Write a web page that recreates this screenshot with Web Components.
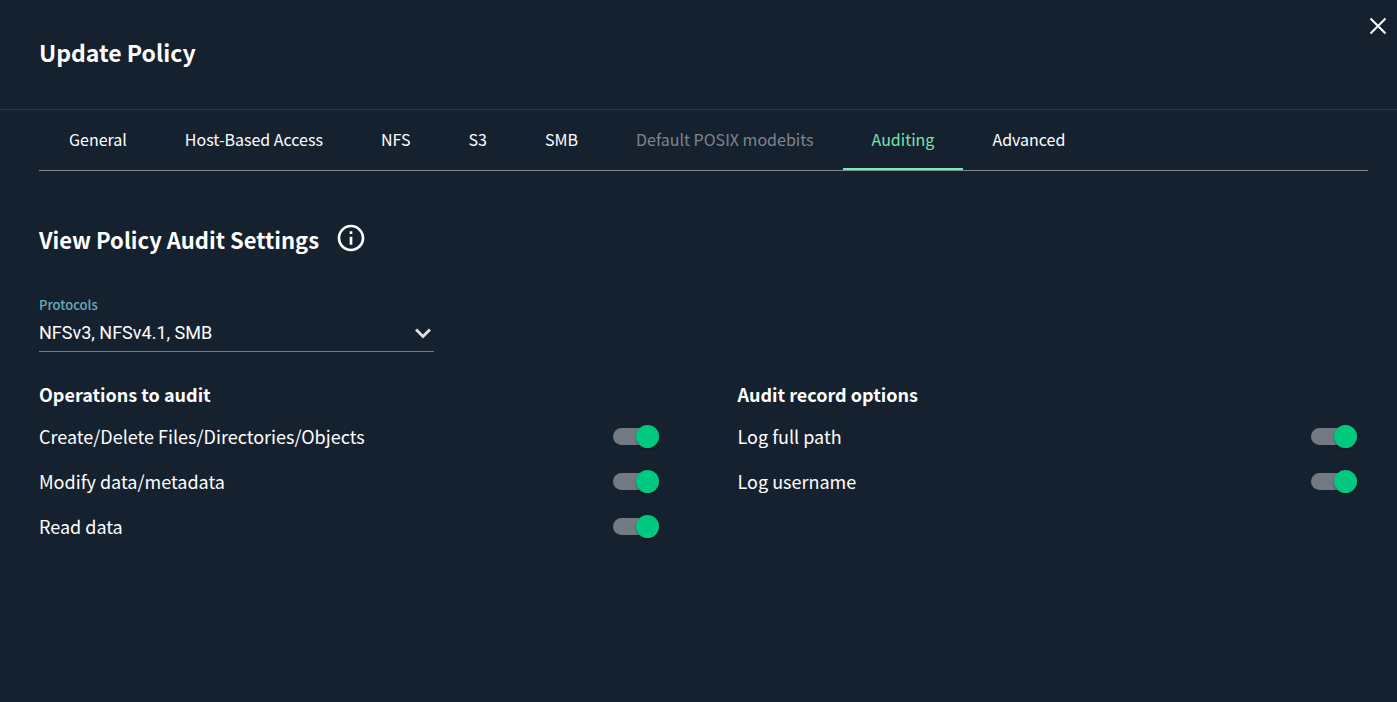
<!DOCTYPE html>
<html lang="en">
<head>
<meta charset="utf-8">
<title>Update Policy</title>
<style>
  html { background: #162130; }
  body {
    margin: 0;
    color: #fff;
    font-family: "Noto Sans CJK SC", "Noto Sans", sans-serif;
  }
</style>
</head>
<body>
<policy-dialog heading="Update Policy">
  <policy-tabs slot="tabs">
    <policy-tab>General</policy-tab>
    <policy-tab>Host-Based Access</policy-tab>
    <policy-tab>NFS</policy-tab>
    <policy-tab>S3</policy-tab>
    <policy-tab>SMB</policy-tab>
    <policy-tab disabled>Default POSIX modebits</policy-tab>
    <policy-tab selected>Auditing</policy-tab>
    <policy-tab>Advanced</policy-tab>
  </policy-tabs>
  <section-title>View Policy Audit Settings</section-title>
  <select-field label="Protocols" value="NFSv3, NFSv4.1, SMB"></select-field>
  <option-columns>
    <option-group heading="Operations to audit">
      <toggle-row>Create/Delete Files/Directories/Objects</toggle-row>
      <toggle-row>Modify data/metadata</toggle-row>
      <toggle-row>Read data</toggle-row>
    </option-group>
    <option-group heading="Audit record options">
      <toggle-row>Log full path</toggle-row>
      <toggle-row>Log username</toggle-row>
    </option-group>
  </option-columns>
</policy-dialog>

<script>
class BaseElement extends HTMLElement {
  render(html) {
    this.attachShadow({ mode: "open" }).innerHTML = html;
  }
}

customElements.define("policy-dialog", class extends BaseElement {
  connectedCallback() {
    this.render(`
      <style>
        :host { display: block; }
        header {
          display: flex; justify-content: space-between; align-items: flex-start;
          box-sizing: border-box; min-height: 110px;
          padding: 12px 5px 0 39px; border-bottom: 1px solid #1f3d50;
        }
        h1 { margin: 22px 0 0; font-size: 23px; line-height: 36px; font-weight: 700; }
        button { display: flex; padding: 0; border: 0; background: none; color: #fff; cursor: pointer; }
      </style>
      <header>
        <h1></h1>
        <button type="button" aria-label="Close">
          <svg width="28" height="28" viewBox="0 0 28 28" fill="none" stroke="currentColor" stroke-width="2"><path d="M6.5 6.5l15 15M21.5 6.5l-15 15"/></svg>
        </button>
      </header>
      <slot name="tabs"></slot>
      <main><slot></slot></main>`);
    this.shadowRoot.querySelector("h1").textContent = this.getAttribute("heading");
  }
});

customElements.define("policy-tabs", class extends BaseElement {
  connectedCallback() {
    this.render(`
      <style>
        :host { display: block; margin: 0 29px 0 39px; }
        div { display: flex; height: 60px; padding-left: 1px; border-bottom: 1px solid #7d898e; }
      </style>
      <div role="tablist"><slot></slot></div>`);
  }
});

customElements.define("policy-tab", class extends BaseElement {
  connectedCallback() {
    this.render(`
      <style>
        :host { display: flex; }
        button {
          padding: 0 29px; border: 0; background: none; color: #fff;
          border-bottom: 2px solid transparent;
          font: 400 16px/24px "Noto Sans CJK SC", "Noto Sans", sans-serif;
          white-space: nowrap; cursor: pointer;
        }
        :host([selected]) button { color: #78e3ad; border-bottom-color: #78ecac; }
        button:disabled { color: #7f858e; cursor: default; }
      </style>
      <button type="button" role="tab"><slot></slot></button>`);
    const button = this.shadowRoot.querySelector("button");
    button.disabled = this.hasAttribute("disabled");
    button.setAttribute("aria-selected", this.hasAttribute("selected"));
  }
});

customElements.define("section-title", class extends BaseElement {
  connectedCallback() {
    this.render(`
      <style>
        :host { display: flex; align-items: flex-start; gap: 16px; margin: 51px 39px 0; }
        h2 { margin: 0; font-size: 22px; line-height: 34px; font-weight: 700; }
        button { display: flex; padding: 0; border: 0; background: none; color: #fff; cursor: pointer; }
      </style>
      <h2><slot></slot></h2>
      <button type="button" aria-label="More information">
        <svg width="32" height="32" viewBox="0 0 24 24" fill="currentColor"><path d="M11 7h2v2h-2zm0 4h2v6h-2zm1-9C6.48 2 2 6.48 2 12s4.48 10 10 10 10-4.48 10-10S17.52 2 12 2zm0 18c-4.41 0-8-3.590-8-8s3.590-8 8-8 8 3.590 8 8-3.590 8-8 8z"/></svg>
      </button>`);
  }
});

customElements.define("select-field", class extends BaseElement {
  connectedCallback() {
    this.render(`
      <style>
        :host { display: block; max-width: 395px; margin: 37px 39px 0; }
        label { display: block; color: #68abb8; font-size: 13px; line-height: 24px; font-weight: 500; }
        .box { display: grid; align-items: center; border-bottom: 1px solid #747c89; }
        select, svg { grid-area: 1 / 1; }
        select {
          appearance: none; width: 100%; height: 34px; margin: 0; padding: 0 30px 2px 0;
          border: 0; background: none; color: #fff; font: 18px/30px Roboto, sans-serif;
        }
        option { color: #000; }
        svg { justify-self: end; margin-right: 3px; pointer-events: none; }
      </style>
      <label for="field"></label>
      <div class="box">
        <select id="field"><option></option></select>
        <svg width="16" height="16" viewBox="0 0 16 16" fill="none" stroke="#dcdee0" stroke-width="3"><path d="M1 3.500l7 7 7-7"/></svg>
      </div>`);
    this.shadowRoot.querySelector("label").textContent = this.getAttribute("label");
    this.shadowRoot.querySelector("option").textContent = this.getAttribute("value");
  }
});

customElements.define("option-columns", class extends BaseElement {
  connectedCallback() {
    this.render(`
      <style>
        :host { display: grid; grid-template-columns: 1fr 1fr; margin-top: 27px; }
      </style>
      <slot></slot>`);
  }
});

customElements.define("option-group", class extends BaseElement {
  connectedCallback() {
    this.render(`
      <style>
        :host { display: block; padding: 0 40px 0 39px; }
        h3 { margin: 0 0 5px; font-size: 18px; line-height: 30px; font-weight: 700; }
      </style>
      <h3></h3>
      <slot></slot>`);
    this.shadowRoot.querySelector("h3").textContent = this.getAttribute("heading");
  }
});

customElements.define("toggle-row", class extends BaseElement {
  connectedCallback() {
    this.render(`
      <style>
        :host { display: block; }
        label {
          display: flex; align-items: center; justify-content: space-between;
          min-height: 45px; font-size: 18px; line-height: 30px; cursor: pointer;
        }
        span { padding-bottom: 2px; }
        input {
          appearance: none; flex: none; display: flex; align-items: center; justify-content: flex-end;
          width: 46px; height: 17px; margin: 0; border-radius: 9px; background: #737983; cursor: pointer;
        }
        input::before {
          content: ""; flex: none; width: 23px; height: 23px; border-radius: 50%;
          background: #00c97f; box-shadow: 0 1px 2px rgba(0, 0, 0, .4);
        }
        input:not(:checked) { justify-content: flex-start; }
      </style>
      <label><span><slot></slot></span><input type="checkbox" role="switch" checked></label>`);
  }
});
</script>
</body>
</html>
